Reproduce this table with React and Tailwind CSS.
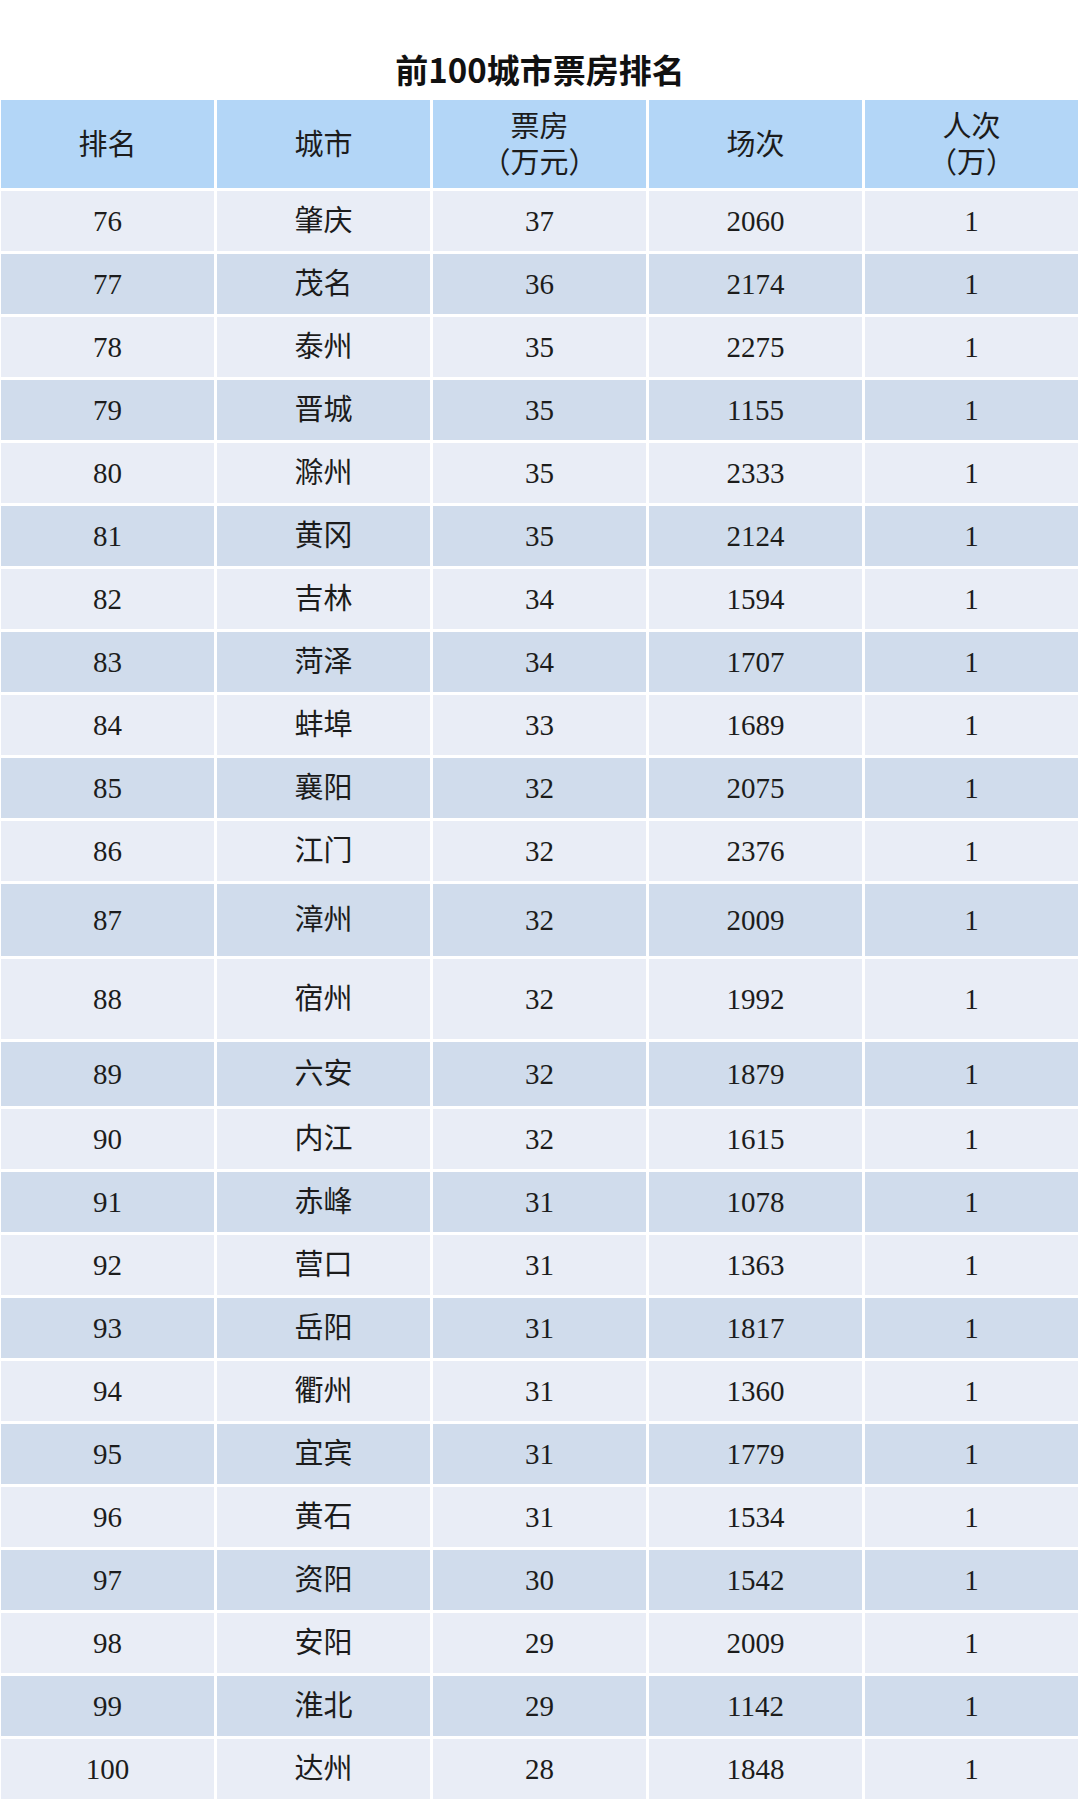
const rows = [
  ["76", "肇庆", "37", "2060", "1"],
  ["77", "茂名", "36", "2174", "1"],
  ["78", "泰州", "35", "2275", "1"],
  ["79", "晋城", "35", "1155", "1"],
  ["80", "滁州", "35", "2333", "1"],
  ["81", "黄冈", "35", "2124", "1"],
  ["82", "吉林", "34", "1594", "1"],
  ["83", "菏泽", "34", "1707", "1"],
  ["84", "蚌埠", "33", "1689", "1"],
  ["85", "襄阳", "32", "2075", "1"],
  ["86", "江门", "32", "2376", "1"],
  ["87", "漳州", "32", "2009", "1"],
  ["88", "宿州", "32", "1992", "1"],
  ["89", "六安", "32", "1879", "1"],
  ["90", "内江", "32", "1615", "1"],
  ["91", "赤峰", "31", "1078", "1"],
  ["92", "营口", "31", "1363", "1"],
  ["93", "岳阳", "31", "1817", "1"],
  ["94", "衢州", "31", "1360", "1"],
  ["95", "宜宾", "31", "1779", "1"],
  ["96", "黄石", "31", "1534", "1"],
  ["97", "资阳", "30", "1542", "1"],
  ["98", "安阳", "29", "2009", "1"],
  ["99", "淮北", "29", "1142", "1"],
  ["100", "达州", "28", "1848", "1"],
];

// a few rows in the source image are taller than the rest
const rowHeight = (rank) => {
  if (rank === "87") return "h-[72px]";
  if (rank === "88") return "h-[80px]";
  if (rank === "89") return "h-[64px]";
  return "h-[60px]";
};

const App = () => {
  const styles = {
    headCell: "flex flex-col items-center justify-center bg-[#b3d6f7] leading-[36px] pt-[2px]",
    cell: "flex items-center justify-center pt-[2px]",
  };

  return (
    <div
      className="w-[1080px] h-[1800px] bg-white overflow-hidden text-[#1c1c1c]"
      style={{ fontFamily: '"Liberation Serif", "Noto Sans CJK SC", serif' }}
    >
      <div className="h-[100px] flex items-center justify-center pt-[40px]">
        <h1
          className="text-[33px] font-bold text-[#111]"
          style={{ fontFamily: '"Noto Sans CJK SC", "Noto Sans", sans-serif' }}
        >
          前100城市票房排名
        </h1>
      </div>

      <div className="pl-[1px] pr-[2px] flex flex-col gap-[3px] text-[29px]">
        <div className="grid grid-cols-5 gap-[3px] h-[88px]">
          <div className={styles.headCell}>排名</div>
          <div className={styles.headCell}>城市</div>
          <div className={styles.headCell}>
            <span>票房</span>
            <span>（万元）</span>
          </div>
          <div className={styles.headCell}>场次</div>
          <div className={styles.headCell}>
            <span>人次</span>
            <span>（万）</span>
          </div>
        </div>

        {rows.map((row, index) => (
          <div
            key={row[0]}
            className={`grid grid-cols-5 gap-[3px] ${rowHeight(row[0])}`}
          >
            {row.map((value, i) => (
              <div
                key={i}
                className={`${styles.cell} ${index % 2 === 0 ? "bg-[#e9edf6]" : "bg-[#d0dcec]"}`}
              >
                {value}
              </div>
            ))}
          </div>
        ))}
      </div>
    </div>
  );
};

export default App;
